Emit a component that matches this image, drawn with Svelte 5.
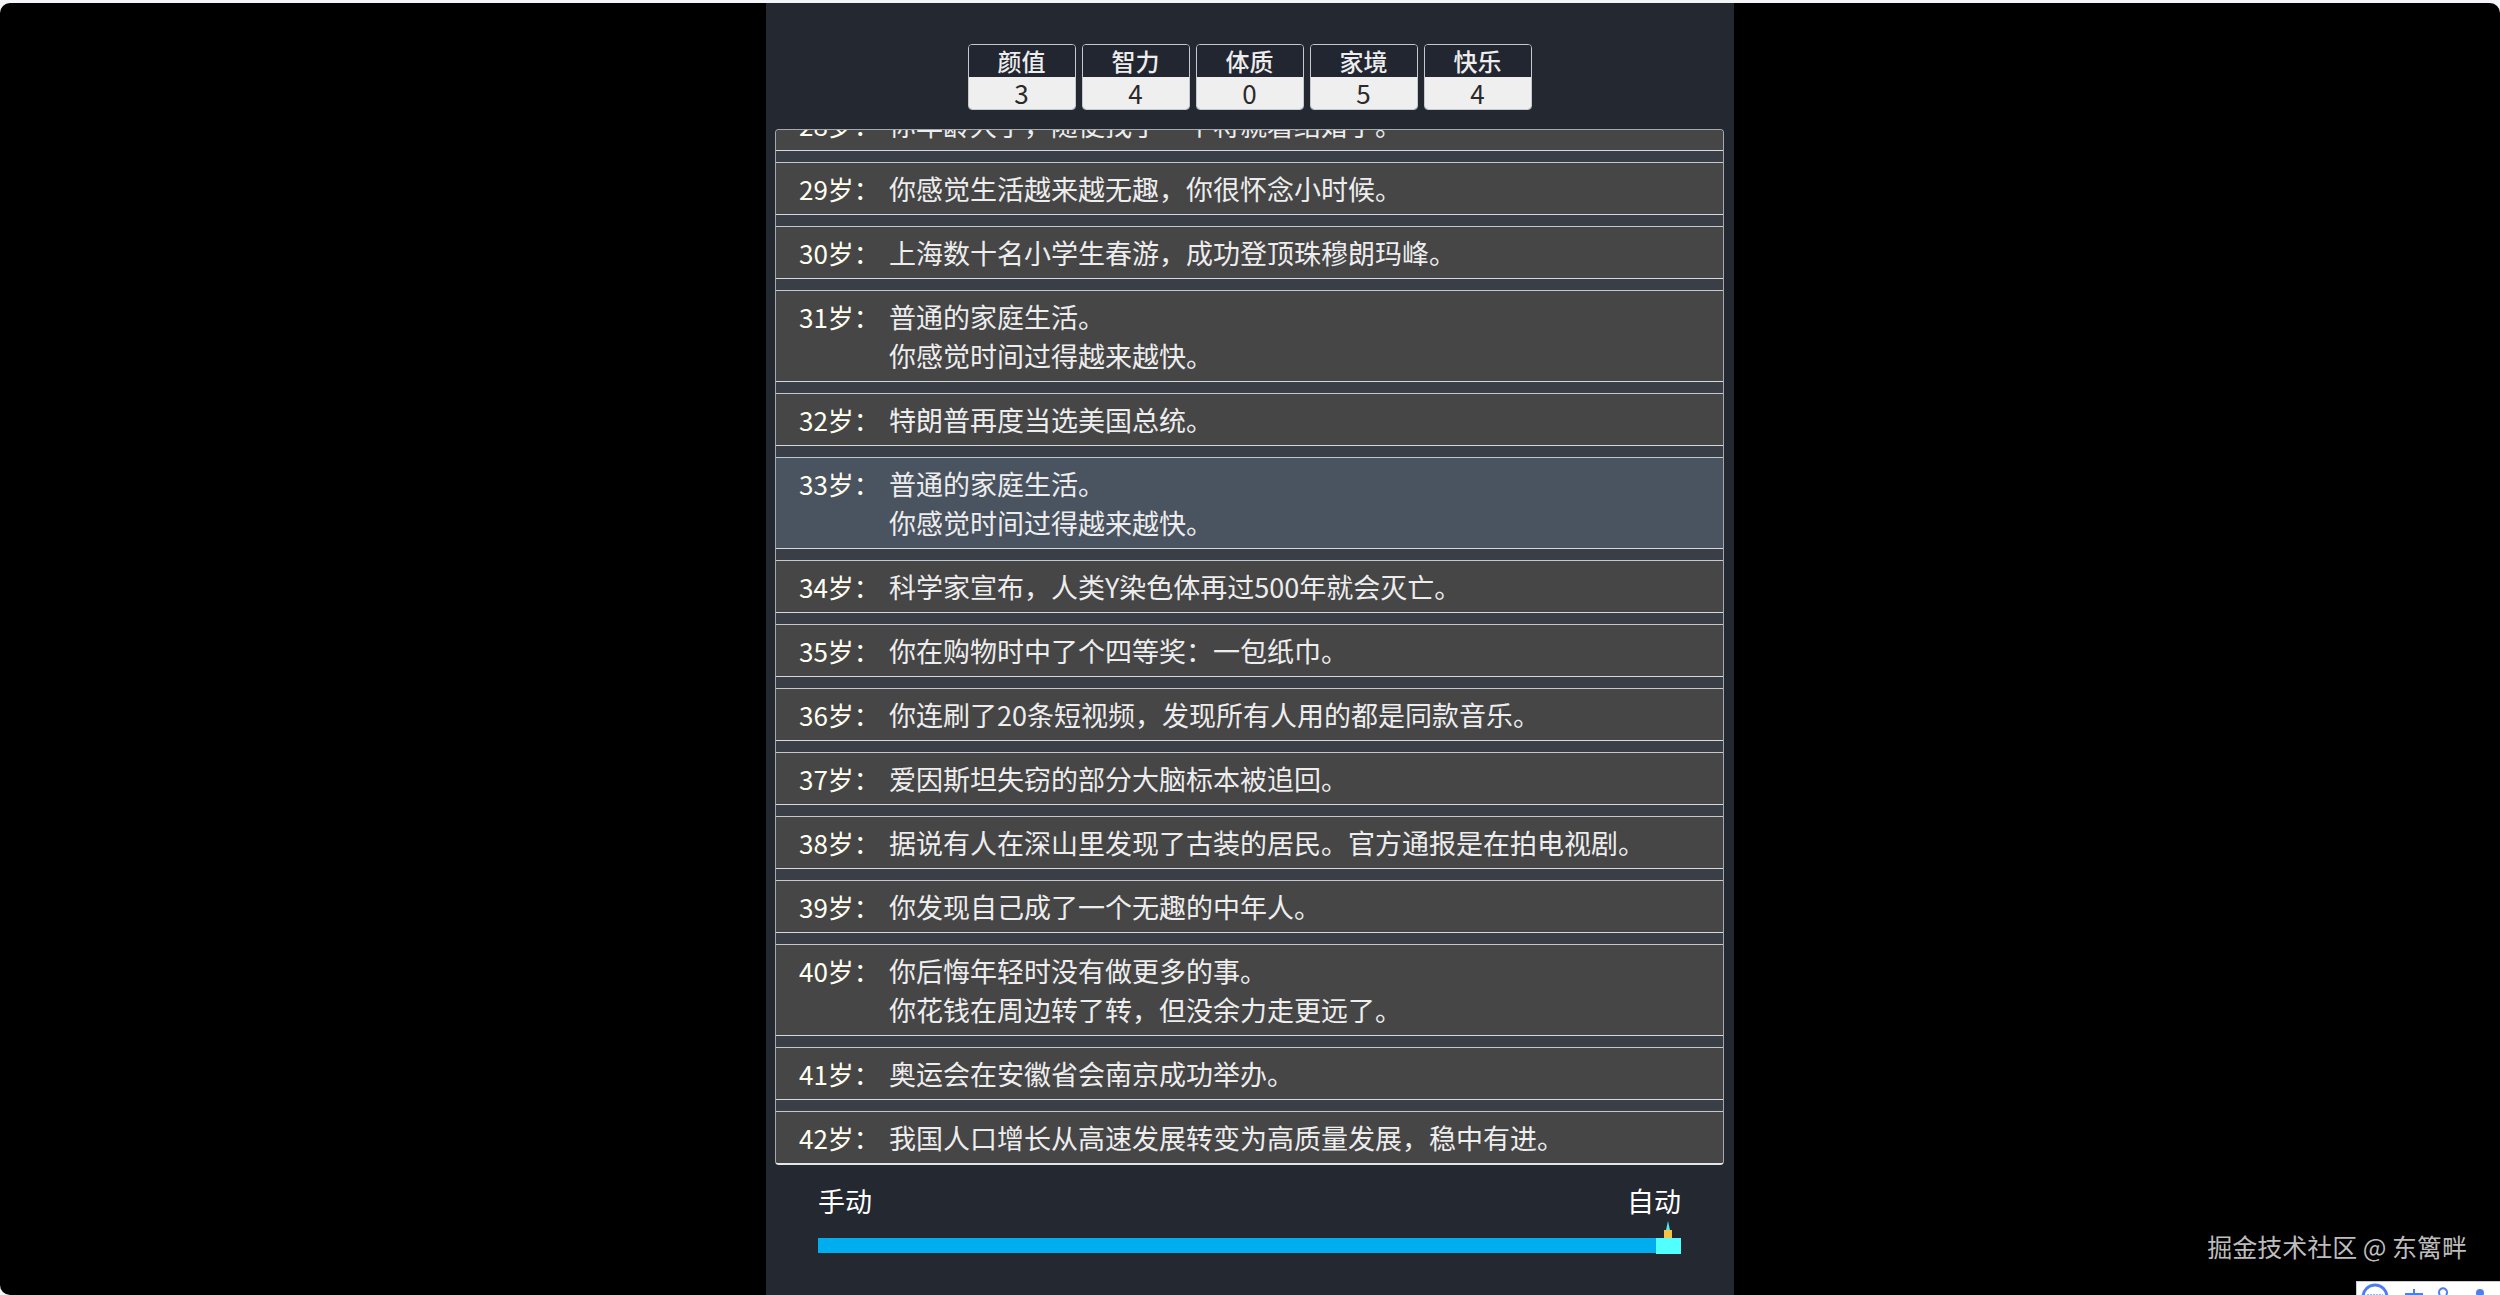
<script lang="ts">
  type Stat = { label: string; value: number };
  type LifeEvent = { age: number; lines: string[] };

  const stats: Stat[] = [
    { label: "颜值", value: 3 },
    { label: "智力", value: 4 },
    { label: "体质", value: 0 },
    { label: "家境", value: 5 },
    { label: "快乐", value: 4 },
  ];

  const events: LifeEvent[] = [
    { age: 28, lines: ["你年龄大了，随便找了一个将就着结婚了。"] },
    { age: 29, lines: ["你感觉生活越来越无趣，你很怀念小时候。"] },
    { age: 30, lines: ["上海数十名小学生春游，成功登顶珠穆朗玛峰。"] },
    { age: 31, lines: ["普通的家庭生活。", "你感觉时间过得越来越快。"] },
    { age: 32, lines: ["特朗普再度当选美国总统。"] },
    { age: 33, lines: ["普通的家庭生活。", "你感觉时间过得越来越快。"] },
    { age: 34, lines: ["科学家宣布，人类Y染色体再过500年就会灭亡。"] },
    { age: 35, lines: ["你在购物时中了个四等奖：一包纸巾。"] },
    { age: 36, lines: ["你连刷了20条短视频，发现所有人用的都是同款音乐。"] },
    { age: 37, lines: ["爱因斯坦失窃的部分大脑标本被追回。"] },
    { age: 38, lines: ["据说有人在深山里发现了古装的居民。官方通报是在拍电视剧。"] },
    { age: 39, lines: ["你发现自己成了一个无趣的中年人。"] },
    { age: 40, lines: ["你后悔年轻时没有做更多的事。", "你花钱在周边转了转，但没余力走更远了。"] },
    { age: 41, lines: ["奥运会在安徽省会南京成功举办。"] },
    { age: 42, lines: ["我国人口增长从高速发展转变为高质量发展，稳中有进。"] },
  ];

  let selectedAge = $state(33);
  let speed = $state(100);
</script>

<div class="screen">
  <main class="game">
    <dl class="stats">
      {#each stats as stat}
        <div class="stat">
          <dt>{stat.label}</dt>
          <dd>{stat.value}</dd>
        </div>
      {/each}
    </dl>

    <ol class="timeline">
      {#each events as event (event.age)}
        <li class:selected={event.age === selectedAge}>
          <button class="event" type="button" onclick={() => (selectedAge = event.age)}>
            <span class="age">{event.age}岁：</span>
            <span class="text">
              {#each event.lines as line}
                <span class="line">{line}</span>
              {/each}
            </span>
          </button>
        </li>
      {/each}
    </ol>

    <div class="speed">
      <div class="speed-labels">
        <label for="speed">手动</label>
        <label for="speed">自动</label>
      </div>
      <div class="slider">
        <input id="speed" type="range" min="0" max="100" bind:value={speed} />
        <svg class="candle" width="10" height="17" viewBox="0 0 10 17" aria-hidden="true">
          <path d="M5 0 L7 9 H3 Z" fill="#4fe9f5" />
          <rect x="1" y="9" width="8" height="8" fill="#f6c344" />
        </svg>
      </div>
    </div>
  </main>

  <p class="watermark">掘金技术社区 @ 东篱畔</p>

  <div class="ime">
    <svg width="144" height="14" viewBox="0 0 144 14" aria-hidden="true">
      <rect width="144" height="14" fill="#fff" />
      <path d="M0 14 V0 H144" fill="none" stroke="#c9cbd0" stroke-width="2" />
      <g fill="none" stroke="#4f7df0" stroke-width="3">
        <circle cx="19" cy="16" r="12" />
        <path d="M58 8 V14" stroke-width="2" />
        <path d="M49 13 H67" stroke-width="2" />
        <path d="M84 14 a4 4 0 1 1 6 0" stroke-width="2" />
      </g>
      <path d="M11 14 H27" stroke="#9db5f5" stroke-width="2" stroke-dasharray="2 1" />
      <circle cx="124" cy="12" r="4" fill="#4f7df0" />
    </svg>
  </div>
</div>

<style>
  :global(body) {
    margin: 0;
    background: #f4f5f9;
  }

  .screen {
    position: relative;
    box-sizing: border-box;
    height: 100vh;
    padding-top: 3px;
    overflow: hidden;
    font-family: "Noto Sans CJK SC", sans-serif;
    font-size: 27px;
    color: #ededed;
  }

  .screen::before {
    content: "";
    position: absolute;
    inset: 3px 0 0;
    border-radius: 10px;
    background: #000;
    z-index: -1;
  }

  .game {
    box-sizing: border-box;
    display: flex;
    flex-direction: column;
    width: 39%;
    min-width: 640px;
    max-width: 968px;
    height: 100%;
    margin: 0 auto;
    padding: 41px 10px 41px 9px;
    background: #242831;
  }

  .stats {
    display: flex;
    justify-content: center;
    gap: 6px;
    margin: 0 0 19px;
  }

  .stat {
    box-sizing: border-box;
    width: 108px;
    border: 1px solid #c4c8cf;
    border-radius: 4px;
    overflow: hidden;
    text-align: center;
    line-height: 32px;
  }

  .stat dt {
    font-size: 24px;
    font-weight: 500;
    background: #222631;
  }

  .stat dd {
    margin: 0;
    font-size: 26px;
    color: #2a2a2a;
    background: #efefef;
  }

  .timeline {
    flex: 1;
    min-height: 0;
    display: flex;
    flex-direction: column;
    justify-content: flex-end;
    gap: 11px;
    margin: 0;
    padding: 0;
    overflow: hidden;
    list-style: none;
    border: 1px solid #a4a9b0;
    border-bottom: 2px solid #e6e6e6;
    border-radius: 4px;
    background: #3a3e46;
  }

  li {
    border-top: 1px solid #c4c8cc;
    border-bottom: 1px solid #d6d8da;
    background: #464646;
  }

  li:last-child {
    border-bottom: none;
  }

  .selected {
    background: #4a5360;
  }

  .event {
    display: flex;
    width: 100%;
    padding: 6px 23px;
    border: none;
    background: none;
    font: inherit;
    line-height: 39px;
    color: inherit;
    text-align: left;
    cursor: pointer;
  }

  .age {
    flex: none;
    width: 90px;
    font-size: 26px;
    color: #fffff0;
  }

  .line {
    display: block;
  }

  .speed {
    padding: 16px 43px 0;
  }

  .speed-labels {
    display: flex;
    justify-content: space-between;
    line-height: 40px;
    color: #fff;
  }

  .slider {
    position: relative;
    margin-top: 16px;
    height: 17px;
  }

  input {
    display: block;
    width: 100%;
    height: 17px;
    margin: 0;
    appearance: none;
    background: linear-gradient(#00adef, #00adef) center / 100% 15px no-repeat;
  }

  input::-webkit-slider-thumb {
    appearance: none;
    width: 25px;
    height: 16px;
    background: #52ffff;
  }

  .candle {
    position: absolute;
    right: 8px;
    bottom: 16px;
  }

  .watermark {
    position: absolute;
    right: 33px;
    bottom: 30px;
    margin: 0;
    font-size: 25px;
    line-height: 38px;
    color: #bdbdbd;
  }

  .ime {
    position: absolute;
    right: 0;
    bottom: 0;
    line-height: 0;
  }
</style>
